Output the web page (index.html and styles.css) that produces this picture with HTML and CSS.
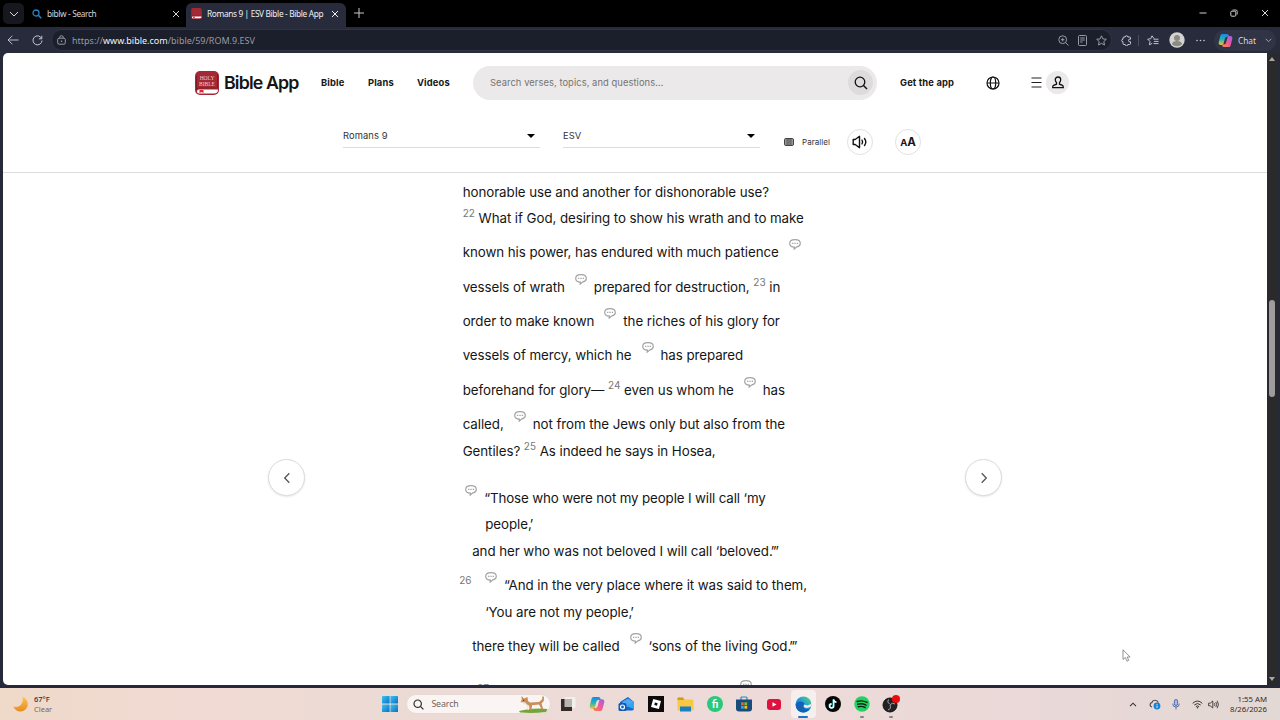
FILE: index.html
```html
<!DOCTYPE html>
<html lang="en">
<head>
  <meta charset="UTF-8" />
  <title>Romans 9 | ESV Bible - Bible App</title>
  <link rel="stylesheet" href="styles.css">
</head>
<body>

  <svg class="defs" width="0" height="0">
    <symbol id="note" viewBox="0 0 12 11">
      <path d="M6 .7C3 .7.7 2.200.7 4.400c0 2.100 2.100 3.600 4.700 3.700L5.200 10.100 7.900 7.900C10 7.400 11.300 6 11.300 4.400 11.300 2.200 9 .7 6 .7z" fill="#fff" stroke="#a3a3a3" stroke-width="1.200"/>
      <path d="M3.100 4.400h1.300M5.400 4.400h1.300M7.700 4.400h1.300" stroke="#a3a3a3" stroke-width="1.300"/>
    </symbol>
    <symbol id="close" viewBox="0 0 8 8">
      <path d="M1 1l6 6M7 1L1 7" stroke="currentColor" stroke-width="1" fill="none"/>
    </symbol>
    <symbol id="book" viewBox="0 0 24 24">
      <rect width="24" height="24" rx="5" fill="#a32a35"/>
      <path d="M1.500 5v13.500c0-1 1-1.500 2.500-1.500h18.500V3" fill="none" stroke="#7c1720" stroke-width=".8"/>
      <path d="M23 18.500H4a2 2 0 0 0 0 4h15a4 4 0 0 0 4-4z" fill="#fff"/>
      <path d="M4.500 19h4v3l-2-1-2 1z" fill="#d5283b"/>
    </symbol>
    <symbol id="copilot" viewBox="0 0 16 16">
      <path d="M4.500 1h5c1.300 0 1.700.8 2.100 2L12 4H9.500C8 4 7.600 5 7.200 6.500L6 11c-.4 1.300-1 1.800-2.200 1.800H3C1.200 12.800.3 11.500.8 9.500L2.500 3c.4-1.300 1-2 2-2z" fill="url(#cpA)"/>
      <path d="M11.500 15h-5c-1.300 0-1.700-.8-2.100-2L4 12h2.500C8 12 8.400 11 8.800 9.500L10 5c.4-1.300 1-1.800 2.200-1.800h.8c1.800 0 2.700 1.300 2.200 3.300L13.500 13c-.4 1.300-1 2-2 2z" fill="url(#cpB)"/>
    </symbol>
    <linearGradient id="cpA" x1="0" y1="0" x2="0" y2="1">
      <stop offset="0" stop-color="#1a86e8"/><stop offset=".5" stop-color="#22b7b4"/><stop offset="1" stop-color="#f3c52c"/>
    </linearGradient>
    <linearGradient id="cpB" x1="1" y1="0" x2="0" y2="1">
      <stop offset="0" stop-color="#9a5cf0"/><stop offset=".5" stop-color="#ee5a97"/><stop offset="1" stop-color="#fa8a38"/>
    </linearGradient>
    <linearGradient id="edgeG" x1="0" y1="1" x2="1" y2="0">
      <stop offset="0" stop-color="#1464c0"/><stop offset=".5" stop-color="#1d98dc"/><stop offset="1" stop-color="#5fdc6c"/>
    </linearGradient>
    <linearGradient id="moonG" x1="0" y1="0" x2="0" y2="1">
      <stop offset="0" stop-color="#f9c65a"/><stop offset="1" stop-color="#ea8a1c"/>
    </linearGradient>
    <linearGradient id="winG" x1="0" y1="0" x2="1" y2="1">
      <stop offset="0" stop-color="#3fc3ee"/><stop offset="1" stop-color="#0870c8"/>
    </linearGradient>
  </svg>

  <div class="tabs">
    <div class="tab-menu">
      <svg width="10" height="6" viewBox="0 0 10 6"><path d="M1 1l4 4 4-4" fill="none" stroke="#d6d6d8" stroke-width="1"/></svg>
    </div>
    <div class="tab">
      <svg class="tab-icon" width="10" height="10" viewBox="0 0 10 10"><circle cx="4" cy="4" r="3" fill="none" stroke="#2c83c4" stroke-width="1.300"/><path d="M6.300 6.300l3 3" stroke="#2c83c4" stroke-width="1.500"/></svg>
      <span class="tab-title">biblw - Search</span>
      <svg class="tab-close" width="8" height="8"><use href="#close"/></svg>
    </div>
    <div class="tab active">
      <svg class="tab-icon" width="11" height="11"><use href="#book"/></svg>
      <span class="tab-title">Romans 9 | ESV Bible - Bible App</span>
      <svg class="tab-close" width="8" height="8"><use href="#close"/></svg>
    </div>
    <svg class="new-tab" width="10" height="10" viewBox="0 0 10 10"><path d="M5 0v10M0 5h10" stroke="#c9c9cc" stroke-width="1"/></svg>
    <div class="window-buttons">
      <svg width="8" height="8" viewBox="0 0 8 8"><path d="M.5 4h7" stroke="#cfcfcf"/></svg>
      <svg width="8" height="8" viewBox="0 0 8 8"><rect x=".8" y="2.200" width="5" height="5" rx="1" fill="none" stroke="#cfcfcf"/><path d="M2.500 1h3.500q1.200 0 1.200 1.200V5.500" fill="none" stroke="#cfcfcf" stroke-width=".9"/></svg>
      <svg width="8" height="8"><use href="#close"/></svg>
    </div>
  </div>

  <div class="toolbar">
    <svg class="back" width="12" height="10" viewBox="0 0 12 10"><path d="M11.500 5H1M5.300.8L1 5l4.300 4.200" fill="none" stroke="#b9bcc6" stroke-width="1"/></svg>
    <svg class="reload" width="11" height="11" viewBox="0 0 11 11"><path d="M9.600 3.500A4.500 4.500 0 1 0 10 5.500M9.800.8v3H6.900" fill="none" stroke="#c3c6cf" stroke-width="1"/></svg>
    <div class="address">
      <svg width="9" height="10" viewBox="0 0 9 10"><rect x=".7" y="3.200" width="7.600" height="6" rx="1.400" fill="none" stroke="#a5a8b0" stroke-width=".9"/><path d="M2.700 3.200V2.500a1.800 1.800 0 0 1 3.600 0v.7" fill="none" stroke="#a5a8b0" stroke-width=".9"/><circle cx="4.500" cy="6.200" r=".8" fill="#a5a8b0"/></svg>
      <span class="url">https://<b>www.bible.com</b>/bible/59/ROM.9.ESV</span>
      <div class="address-icons">
        <svg width="11" height="11" viewBox="0 0 11 11"><g fill="none" stroke="#a5a8b2" stroke-width=".9"><circle cx="4.700" cy="4.700" r="3.900"/><path d="M7.500 7.500l3 3M3 4.700h3.400M4.700 3v3.400"/></g></svg>
        <svg width="9" height="11" viewBox="0 0 9 11"><g fill="none" stroke="#a5a8b2" stroke-width=".9"><rect x=".5" y=".5" width="8" height="10" rx="1"/><path d="M2.200 3h4.600M2.200 5h4.600M2.200 7h2.400"/></g></svg>
        <svg width="11" height="11" viewBox="0 0 11 11"><path d="M5.500.8l1.400 3.100 3.400.4-2.500 2.300.7 3.400-3-1.700-3 1.700.7-3.400L.7 4.300l3.400-.4z" fill="none" stroke="#a5a8b2" stroke-width=".9"/></svg>
      </div>
    </div>
    <svg class="ext" width="11" height="11" viewBox="0 0 11 11"><path d="M3 2h1.200a1.300 1.300 0 0 1 2.600 0H8.500q1 0 1 1v1.200H8.800a1.300 1.300 0 0 0 0 2.600h.7V8.500q0 1-1 1H6.800a1.300 1.300 0 0 1-2.600 0H3q-1 0-1-1V6.800a1.300 1.300 0 0 1 0-2.600V3q0-1 1-1z" fill="none" stroke="#c8cad2" stroke-width="1"/></svg>
    <span class="divider"></span>
    <svg class="favs" width="12" height="11" viewBox="0 0 12 11"><path d="M7 3.600L5 .8 3.800 3.700.7 4.200 3 6.500l-.6 3.300L5.200 8.300M6.500 4.200h5M7 6.400h4.500M6.500 8.600h5" fill="none" stroke="#c8cad2" stroke-width=".95"/></svg>
    <svg class="avatar" width="16" height="16" viewBox="0 0 16 16"><circle cx="8" cy="8" r="7.700" fill="#d4d3cf"/><circle cx="8" cy="6" r="3" fill="#8b8b86"/><path d="M3 12c0-4 10-4 10 0-2 3-8 3-10 0z" fill="#8b8b86"/></svg>
    <svg class="more" width="9" height="3" viewBox="0 0 9 3"><g fill="#c8cad2"><circle cx="1" cy="1.500" r=".8"/><circle cx="4.500" cy="1.500" r=".8"/><circle cx="8" cy="1.500" r=".8"/></g></svg>
    <div class="chat">
      <svg width="15" height="15"><use href="#copilot"/></svg>
      <span>Chat</span>
      <svg width="7" height="5" viewBox="0 0 7 5"><path d="M.7.8l2.800 2.900L6.300.8" fill="none" stroke="#a9abb5" stroke-width=".9"/></svg>
    </div>
  </div>

  <div class="window">
    <div class="page">
      <header>
        <div class="nav-row">
          <div class="logo">
            <svg width="24" height="24"><use href="#book"/></svg>
            <div class="logo-text">HOLY<br>BIBLE</div>
          </div>
          <h1>Bible App</h1>
          <nav>
            <a class="n1">Bible</a>
            <a class="n2">Plans</a>
            <a class="n3">Videos</a>
          </nav>
          <div class="search">
            <span>Search verses, topics, and questions...</span>
            <div class="search-btn">
              <svg width="14" height="14" viewBox="0 0 14 14"><circle cx="6" cy="6" r="4.800" fill="none" stroke="#111" stroke-width="1.300"/><path d="M9.500 9.500l3.500 3.500" stroke="#111" stroke-width="1.400"/></svg>
            </div>
          </div>
          <a class="get-app">Get the app</a>
          <svg class="globe" width="14" height="14" viewBox="0 0 14 14"><g fill="none" stroke="#111" stroke-width="1.200"><circle cx="7" cy="7" r="6"/><ellipse cx="7" cy="7" rx="2.700" ry="6"/><path d="M1 7h12"/></g></svg>
          <svg class="burger" width="11" height="11" viewBox="0 0 11 11"><path d="M.5 1h10M.5 5.500h10M.5 10h10" stroke="#222" stroke-width="1.150"/></svg>
          <div class="user">
            <svg width="12" height="13" viewBox="0 0 12 13"><path d="M6 1a2.700 2.700 0 0 0-2.700 2.700C3.300 5 3.700 5.700 4.500 6.700V8.200L1.500 9.400Q.7 9.800.7 11.600H11.300Q11.300 9.800 10.500 9.400L7.500 8.200V6.700C8.300 5.700 8.700 5 8.700 3.700A2.700 2.700 0 0 0 6 1z" fill="none" stroke="#111" stroke-width="1.300"/></svg>
          </div>
        </div>
        <div class="reader-row">
          <div class="select"><span>Romans 9</span><i class="caret"></i></div>
          <div class="select"><span>ESV</span><i class="caret"></i></div>
          <div class="parallel">
            <svg width="10" height="8" viewBox="0 0 10 8"><rect x=".5" y=".5" width="9" height="7" rx="1.300" fill="#999" stroke="#333" stroke-width=".9"/><path d="M3.100 1v6M5 1v6M6.900 1v6" stroke="#333" stroke-width=".7"/></svg>
            <span>Parallel</span>
          </div>
          <div class="round audio">
            <svg width="16" height="14" viewBox="0 0 16 14"><g fill="none" stroke="#111" stroke-width="1.400" stroke-linejoin="round" stroke-linecap="round"><path d="M1.200 4.500h2L7.500 1.300v11.400L3.200 9.500h-2z"/><path d="M10 5.200q1.200 1.800 0 3.600M12.500 3.500q2.600 3.500 0 7"/></g></svg>
          </div>
          <div class="round font"><small>A</small>A</div>
        </div>
      </header>

      <main>
        <div class="line">honorable use and another for dishonorable use?</div>
        <div class="line"><sup>22</sup> What if God, desiring to show his wrath and to make</div>
        <div class="line noted">known his power, has endured with much patience<svg class="note"><use href="#note"/></svg></div>
        <div class="line noted">vessels of wrath<svg class="note"><use href="#note"/></svg>prepared for destruction, <sup>23</sup> in</div>
        <div class="line noted">order to make known<svg class="note"><use href="#note"/></svg>the riches of his glory for</div>
        <div class="line noted">vessels of mercy, which he<svg class="note"><use href="#note"/></svg>has prepared</div>
        <div class="line noted">beforehand for glory— <sup>24</sup> even us whom he<svg class="note"><use href="#note"/></svg>has</div>
        <div class="line noted">called,<svg class="note"><use href="#note"/></svg>not from the Jews only but also from the</div>
        <div class="line">Gentiles? <sup>25</sup> As indeed he says in Hosea,</div>

        <div class="poetry">
          <div class="line noted lead"><svg class="note"><use href="#note"/></svg>“Those who were not my people I will call ‘my</div>
          <div class="line wrap">people<span class="q">,’</span></div>
          <div class="line">and her who was not beloved I will call ‘beloved<span class="q">.’”</span></div>
          <div class="line noted verse"><sup>26</sup><svg class="note"><use href="#note"/></svg>“And in the very place where it was said to them,</div>
          <div class="line wrap">‘You are not my people<span class="q">,’</span></div>
          <div class="line noted">there they will be called<svg class="note"><use href="#note"/></svg>‘sons of the living God<span class="q">.’”</span></div>
        </div>

        <div class="poetry">
          <div class="line noted next"><sup>27</sup><svg class="note"><use href="#note"/></svg></div>
        </div>
      </main>

      <div class="pager prev"><svg width="8" height="12" viewBox="0 0 8 12"><path d="M6.300 1.300L1.700 6l4.600 4.700" fill="none" stroke="#555" stroke-width="1.300"/></svg></div>
      <div class="pager next-page"><svg width="8" height="12" viewBox="0 0 8 12"><path d="M1.700 1.300L6.300 6l-4.600 4.700" fill="none" stroke="#555" stroke-width="1.300"/></svg></div>
      <svg class="cursor" width="9" height="13" viewBox="0 0 9 13"><path d="M1 .8v9.700l2.300-2 1.700 3.700 1.700-.8L5.200 8h2.900z" fill="#fff" stroke="#777" stroke-width=".8"/></svg>
    </div>
    <div class="scrollbar">
      <i class="arrow-up"></i>
      <div class="thumb"></div>
      <i class="arrow-down"></i>
    </div>
  </div>

  <div class="taskbar">
    <div class="weather">
      <svg width="16" height="16" viewBox="0 0 16 16"><path d="M9.500.5c8 3.500 6.500 14.500-2 15C4 15.600 1.500 13.500.5 10.500 6 12.500 11 8 9.500.5z" fill="url(#moonG)"/></svg>
      <div class="temp"><b>67°F</b><span>Clear</span></div>
    </div>

    <div class="apps">
      <div class="app"><svg width="16" height="16" viewBox="0 0 16 16"><g fill="url(#winG)"><rect width="7.600" height="7.600" rx=".6"/><rect x="8.400" width="7.600" height="7.600" rx=".6"/><rect y="8.400" width="7.600" height="7.600" rx=".6"/><rect x="8.400" y="8.400" width="7.600" height="7.600" rx=".6"/></g></svg></div>
      <div class="task-search">
        <svg width="11" height="11" viewBox="0 0 11 11"><circle cx="4.700" cy="4.700" r="3.700" fill="none" stroke="#333" stroke-width="1.200"/><path d="M7.400 7.400l3 3" stroke="#333" stroke-width="1.300"/></svg>
        <span>Search</span>
        <svg class="dog" width="30" height="18" viewBox="0 0 30 18"><path d="M1 16q14-3.500 28.500-2l-1.500 3q-12 1.500-26 .5z" fill="#75a53a"/><path d="M3.500 1l2.500 2.500L9.500 2l.5 4 2 1.500 9-.5 3-2.500L24.500 1l1.500 1-.2 4-2.300 2.500 1.700 5.500h-1.700l-2.500-4.500-7 .7-.5 5h-1.700L11 10.500 6 8.500 2.500 7l1.200-2z" fill="#c98e5a"/><path d="M2.500 6.800l4.500.4 3 3.300 1 4.500H9.500l-1-4.500-3-2z" fill="#f4e7d6"/><circle cx="5.700" cy="5.300" r=".6" fill="#33251d"/></svg>
      </div>
      <div class="app"><svg width="16" height="16" viewBox="0 0 16 16"><rect x="4.500" y="1" width="11" height="11" fill="#f3efec"/><rect x="1" y="3" width="11" height="12" fill="#342b29"/><rect x="4.500" y="3" width="7.500" height="8" fill="#bab5b2"/></svg></div>
      <div class="app"><svg width="16" height="16"><use href="#copilot"/></svg></div>
      <div class="app"><svg width="17" height="16" viewBox="0 0 17 16"><path d="M2 6l8-5 6 5v6.500q0 2-2 2H4q-2 0-2-2z" fill="#1565cf"/><path d="M4 6l6-3.500L16 6l-7 5z" fill="#4aa9f0"/><path d="M16 6v7l-8-3z" fill="#2da5ef"/><rect x=".5" y="7" width="8" height="8" rx="1.500" fill="#125bb5"/><circle cx="4.500" cy="11" r="2" fill="none" stroke="#fff" stroke-width="1.200"/></svg></div>
      <div class="app"><svg width="16" height="16" viewBox="0 0 16 16"><rect width="16" height="16" fill="#0b0b0b"/><path d="M5.200 3l7.800 2.100-2.100 7.900L3 10.900zM6.900 6.500l-.6 2.600 2.700.7.600-2.600z" fill="#fff" fill-rule="evenodd"/></svg></div>
      <div class="app"><svg width="17" height="15" viewBox="0 0 17 15"><path d="M.5 2q0-1.500 1.500-1.500h4.500l1.500 2H15q1.500 0 1.500 1.500v9.500H.5z" fill="#f6c844"/><path d="M.5 1.500q0-1 1-1h4.500L7 3H.5z" fill="#d39a1c"/><path d="M3 9.500h11v5H3z" fill="#1b7dc4"/></svg></div>
      <div class="app"><div class="fi">fi</div></div>
      <div class="app"><svg width="16" height="16" viewBox="0 0 16 16"><path d="M5 4V2q0-1 1-1h4q1 0 1 1v2" fill="none" stroke="#2585c9" stroke-width="1.200"/><path d="M0 3.500h16v9q0 3-3 3H3q-3 0-3-3z" fill="#184c7c"/><path d="M5 6.300h2.800v2.900H5z" fill="#ed5b38"/><path d="M8.400 6.300h2.800v2.900H8.400z" fill="#82bb2a"/><path d="M5 9.800h2.800v2.900H5z" fill="#2ba6e9"/><path d="M8.400 9.800h2.800v2.900H8.400z" fill="#f8bd25"/></svg></div>
      <div class="app"><svg width="14" height="11" viewBox="0 0 14 11"><rect width="14" height="11" rx="3" fill="#e0103f"/><path d="M5.500 3.200v4.600l4-2.300z" fill="#fff"/></svg></div>
      <div class="app current"><svg width="17" height="17" viewBox="0 0 17 17"><circle cx="8.500" cy="8.500" r="8" fill="url(#edgeG)"/><path d="M.7 9C2 4.500 9 4.500 9.500 8.500 8 8.500 7.500 10 8.500 11.500c1.500 2 4.500 1.700 6.500.8-2.500 4.500-8.500 5.500-11.800 2.200Q.7 12 .7 9z" fill="#1261b5"/><path d="M9.500 8.500Q8 10 9.500 11.500q3 1.300 6.500-1L17 7.500l-4.500 2z" fill="#f2e9e8"/></svg></div>
      <div class="app"><svg width="16" height="16" viewBox="0 0 16 16"><circle cx="8" cy="8" r="8" fill="#060606"/><path d="M8.700 3.500v6.600a2 2 0 1 1-2-2M8.700 3.500q.3 2.500 2.800 2.700" fill="none" stroke="#29e5e5" stroke-width="1.500" transform="translate(-.4 -.3)"/><path d="M8.700 3.500v6.600a2 2 0 1 1-2-2M8.700 3.500q.3 2.500 2.800 2.700" fill="none" stroke="#fff" stroke-width="1.500"/></svg></div>
      <div class="app running"><svg width="16" height="16" viewBox="0 0 16 16"><circle cx="8" cy="8" r="7.700" fill="#22d160"/><path d="M3.200 5.500q5-1.500 9.800.9M3.700 8.200q4.300-1.200 8.400.9M4.200 10.700q3.600-.9 7 .8" fill="none" stroke="#0c2214" stroke-width="1.400" stroke-linecap="round"/></svg></div>
      <div class="app running"><svg width="18" height="18" viewBox="0 0 18 18"><circle cx="8" cy="10" r="7" fill="#232124" stroke="#111"/><g fill="none" stroke="#a9a6a8" stroke-width="1"><path d="M6.500 4.500q-2 2.500 1 4.500M13 9q-3-2-5 1M6 15q3.500-1 2-5"/></g><circle cx="14" cy="4" r="4" fill="#e80c0c"/></svg></div>
    </div>

    <div class="tray">
      <svg class="up" width="8" height="5" viewBox="0 0 8 5"><path d="M1 4.200l3-3 3 3" fill="none" stroke="#3b3130" stroke-width="1.100"/></svg>
      <svg class="cloud" width="12" height="11" viewBox="0 0 12 11"><path d="M3 8A2.200 2.200 0 0 1 2.700 3.700 3.500 3.500 0 0 1 9.300 3.500" fill="none" stroke="#544b4b" stroke-width="1.200"/><circle cx="8" cy="7" r="3.400" fill="#1584d8"/><path d="M8 5.200v.9M8 6.700v2.200" stroke="#fff" stroke-width=".9"/></svg>
      <svg class="mic" width="8" height="11" viewBox="0 0 8 11"><rect x="2.400" y=".5" width="3.200" height="6" rx="1.600" fill="#a7bde6" stroke="#4b66a8" stroke-width=".9"/><path d="M.7 4.700q0 3.300 3.300 3.300T7.300 4.700M4 8v2.500" fill="none" stroke="#4b66a8" stroke-width=".9"/></svg>
      <svg class="wifi" width="11" height="9" viewBox="0 0 11 9"><g fill="none" stroke="#3b3534" stroke-width="1"><path d="M.7 3.300q4.800-4.500 9.600 0M2.300 5q3.200-3 6.400 0M3.900 6.600q1.600-1.400 3.200 0"/></g><circle cx="5.500" cy="7.800" r=".8" fill="#3b3534"/></svg>
      <svg class="vol" width="11" height="9" viewBox="0 0 11 9"><g fill="none" stroke="#3b3534" stroke-width=".9"><path d="M.6 3.200h1.600L4.800 1v7L2.200 5.800H.6zM6.300 3.200q.9 1.300 0 2.600M7.800 2q1.800 2.500 0 5M9.200.8q2.500 3.700 0 7.400"/></g></svg>
      <div class="clock">1:55 AM<br>8/26/2026</div>
    </div>
  </div>

</body>
</html>
```

FILE: styles.css
```css
* {
  box-sizing: border-box;
  margin: 0;
  padding: 0;
}

body {
  width: 1280px;
  height: 720px;
  overflow: hidden;
  background: #25293a;
  font-family: Inter, sans-serif;
  color: #161616;
  display: flex;
  flex-direction: column;
}

svg {
  display: block;
  flex-shrink: 0;
}

.defs {
  position: absolute;
}

/* browser tabs */
.tabs {
  height: 27px;
  flex-shrink: 0;
  background: #000;
  display: flex;
  align-items: flex-start;
  color: #d6d6d8;
  font-family: "Noto Sans", sans-serif;
  font-size: 8.3px;
  letter-spacing: -0.35px;
}

.tab-menu {
  width: 21px;
  height: 21px;
  margin: 3px 0 0 3px;
  border-radius: 5px;
  background: #17181f;
  display: flex;
  align-items: center;
  justify-content: center;
}

.tab {
  width: 162px;
  height: 24px;
  margin-top: 3px;
  padding: 0 6px 3px 8px;
  display: flex;
  align-items: center;
}

.tab.active {
  width: 160px;
  padding-left: 5px;
  padding-right: 7px;
  background: #272b3c;
  border-radius: 6px 6px 0 0;
  color: #f0f1f5;
}

.tab-title {
  margin-left: 5px;
  white-space: nowrap;
}

.tab-close {
  margin-left: auto;
}

.new-tab {
  margin: 8px 0 0 8px;
}

.window-buttons {
  margin: 9px 11px 0 auto;
  display: flex;
  gap: 23px;
}

/* toolbar */
.toolbar {
  height: 26px;
  flex-shrink: 0;
  background: #272b3c;
  display: flex;
  align-items: center;
  padding: 0 2px 0 7px;
  font-family: "Noto Sans", sans-serif;
  color: #d5d7df;
}

.reload {
  margin-left: 13px;
}

.address {
  width: 1061px;
  height: 22px;
  margin-left: 8px;
  padding: 0 4px 0 5px;
  border-radius: 11px;
  background: #1b1e2b;
  border: 1px solid #303442;
  display: flex;
  align-items: center;
}

.url {
  margin-left: 6px;
  font-size: 9px;
  color: #969aa5;
}

.url b {
  font-weight: 400;
  color: #f4f5f8;
}

.address-icons {
  margin-left: auto;
  display: flex;
  align-items: center;
  gap: 9px;
}

.ext {
  margin-left: 9px;
}

.divider {
  width: 1px;
  height: 11px;
  margin-left: 6px;
  background: #4a4f60;
}

.favs {
  margin-left: 8px;
}

.avatar {
  margin-left: 10px;
}

.more {
  margin-left: 11px;
}

.chat {
  width: 62px;
  height: 21px;
  margin-left: 9px;
  padding: 0 4px;
  border-radius: 10px;
  background: #303445;
  display: flex;
  align-items: center;
  font-size: 8.3px;
}

.chat span {
  margin: 0 auto 0 5px;
}

/* window frame */
.window {
  height: 635px;
  flex-shrink: 0;
  padding: 0 3px 3px;
  display: flex;
}

.page {
  position: relative;
  width: 1264px;
  height: 632px;
  overflow: hidden;
  background: #fff;
  border-radius: 5px 0 0 5px;
}

.scrollbar {
  width: 10px;
  background: #2b2a2b;
  display: flex;
  flex-direction: column;
  align-items: center;
}

.arrow-up,
.arrow-down {
  border: 3px solid transparent;
}

.arrow-up {
  margin-top: 1px;
  border-bottom: 4px solid #a8a6a4;
}

.thumb {
  width: 6px;
  height: 97px;
  margin-top: 239px;
  border-radius: 3px;
  background: #a09b9d;
}

.arrow-down {
  margin: auto 0 1px;
  border-top: 4px solid #a8a6a4;
}

/* site header */
header {
  height: 120px;
  border-bottom: 1px solid #dddcdc;
  padding-top: 12px;
}

.nav-row {
  height: 35px;
  padding-left: 192px;
  display: flex;
  align-items: center;
}

.logo {
  position: relative;
}

.logo-text {
  position: absolute;
  top: 4px;
  left: 0;
  width: 24px;
  text-align: center;
  font: 5.5px/6px "Liberation Serif", serif;
  color: #f0c9cb;
}

h1 {
  width: 75px;
  margin-left: 5px;
  font-size: 17.8px;
  font-weight: 600;
  letter-spacing: -0.85px;
  white-space: nowrap;
}

nav {
  display: flex;
  margin-left: 22px;
}

nav a,
.get-app {
  font-size: 9.33px;
  font-weight: 700;
  letter-spacing: 0.15px;
  white-space: nowrap;
}

.n1 {
  width: 47px;
}

.n2 {
  width: 49px;
}

.n3 {
  width: 56px;
}

.search {
  width: 404px;
  height: 34px;
  padding: 0 4px 0 17px;
  border-radius: 17px;
  background: #ebe9e9;
  display: flex;
  align-items: center;
  justify-content: space-between;
  font-size: 9.33px;
  letter-spacing: 0.08px;
  color: #757373;
}

.search-btn {
  width: 25px;
  height: 25px;
  border-radius: 50%;
  background: #dddbdb;
  display: flex;
  align-items: center;
  justify-content: center;
}

.get-app {
  width: 55px;
  margin-left: 23px;
}

.globe {
  margin-left: 31px;
}

.burger {
  margin-left: 31px;
}

.user {
  width: 23px;
  height: 23px;
  margin-left: 4px;
  border-radius: 50%;
  background: #ebe9e9;
  display: flex;
  align-items: center;
  justify-content: center;
}

.reader-row {
  height: 26px;
  margin-top: 29px;
  padding-left: 340px;
  display: flex;
  align-items: center;
}

.select {
  width: 197px;
  height: 19px;
  align-self: flex-start;
  margin-right: 23px;
  padding: 0 5px 5px 0;
  border-bottom: 1px solid #dddcdc;
  display: flex;
  align-items: center;
  justify-content: space-between;
  font-size: 9.33px;
  letter-spacing: 0.1px;
  color: #353333;
}

.caret {
  border: 4px solid transparent;
  border-top-color: #000;
  border-bottom: 0;
}

.parallel {
  width: 64px;
  padding-left: 1px;
  display: flex;
  align-items: center;
  font-size: 8px;
  letter-spacing: 0.05px;
  color: #353333;
}

.parallel span {
  margin-left: 8px;
}

.round {
  width: 26px;
  height: 26px;
  border: 1px solid #e3e1e1;
  border-radius: 50%;
  display: flex;
  align-items: center;
  justify-content: center;
}

.font {
  margin-left: 22px;
  align-items: baseline;
  font-size: 11.5px;
  line-height: 25px;
  font-weight: 700;
}

.font small {
  font-size: 9.5px;
}

/* chapter text */
main {
  width: 350px;
  margin: 5.500px 0 0 459.700px;
  font-size: 13.33px;
  letter-spacing: -0.065px;
}

.line {
  height: 26.7px;
  line-height: 26.7px;
  white-space: nowrap;
}

.noted {
  height: 34.3px;
  padding-top: 7.6px;
}

.note {
  display: inline-block;
  width: 12px;
  height: 11px;
  margin: 0 7px 0 10px;
  vertical-align: 7px;
}

sup {
  font-size: 10px;
  letter-spacing: 0;
  line-height: 0;
  vertical-align: 6px;
  color: #777;
}

.poetry {
  padding: 12.8px 0 0 9.5px;
}

/* closing punctuation sits tight */
.q {
  letter-spacing: -1.2px;
}

.wrap {
  padding-left: 13px;
}

.lead {
  margin-left: -17px;
  letter-spacing: -0.13px;
}

.verse {
  margin-left: -13px;
}

.verse .note {
  margin-left: 13.5px;
}

.next {
  padding-left: 5px;
}

.next .note {
  margin-left: 251px;
}

.pager {
  position: absolute;
  top: 406px;
  width: 37px;
  height: 37px;
  border: 1px solid #dcdada;
  border-radius: 50%;
  background: #fff;
  box-shadow: 0 1px 2px rgba(0,0,0,0.1);
  display: flex;
  align-items: center;
  justify-content: center;
}

.prev {
  left: 265px;
}

.next-page {
  left: 962px;
}

.cursor {
  position: absolute;
  left: 1119px;
  top: 596px;
}

/* taskbar */
.taskbar {
  height: 32px;
  flex-shrink: 0;
  display: flex;
  align-items: center;
  background: linear-gradient(to right, #efd9c9, #f1dad3 15%, #ebdad5 35%, #eedbd9 60%, #e8d8d7 85%, #e2d8d4);
  font-family: "Noto Sans", sans-serif;
}

.weather {
  width: 375px;
  padding-left: 13px;
  display: flex;
  align-items: center;
}

.temp {
  margin-left: 5px;
  font-size: 7.5px;
  line-height: 10.5px;
  color: #7b675f;
}

.temp b {
  display: block;
  font-weight: 500;
  color: #3b2c29;
}

.apps {
  display: flex;
  align-items: center;
}

.app {
  position: relative;
  width: 29.4px;
  height: 28px;
  display: flex;
  align-items: center;
  justify-content: center;
}

.current {
  background: #f6efee;
  border-radius: 4px;
  width: 25.4px;
  margin: 0 2px;
}

.current::after,
.running::after {
  content: "";
  position: absolute;
  bottom: 0;
  left: 50%;
  width: 4px;
  height: 2px;
  margin-left: -2px;
  border-radius: 1px;
  background: #8c8180;
}

.current::after {
  width: 10px;
  margin-left: -5px;
  background: #1676c4;
}

.task-search {
  width: 145px;
  height: 20px;
  margin: 0 2px;
  padding: 0 2px 0 6px;
  border-radius: 10px;
  background: #faf5f3;
  border: 1px solid #e6dad7;
  display: flex;
  align-items: center;
  font-size: 8.8px;
  letter-spacing: -0.1px;
  color: #6b6260;
}

.task-search span {
  margin-left: 7px;
}

.dog {
  margin-left: auto;
}

.fi {
  width: 16px;
  height: 16px;
  border-radius: 50%;
  background: #2bc87b;
  color: #fff;
  font: bold 11px/15px Lato, sans-serif;
  text-align: center;
}

.tray {
  margin-left: auto;
  padding-right: 13px;
  display: flex;
  align-items: center;
}

.cloud {
  margin-left: 12px;
}

.mic {
  margin-left: 11px;
}

.wifi {
  margin-left: 12px;
}

.vol {
  margin-left: 5px;
}

.clock {
  width: 48px;
  text-align: right;
  font-size: 7.8px;
  line-height: 10.5px;
  color: #332b2a;
}
```
